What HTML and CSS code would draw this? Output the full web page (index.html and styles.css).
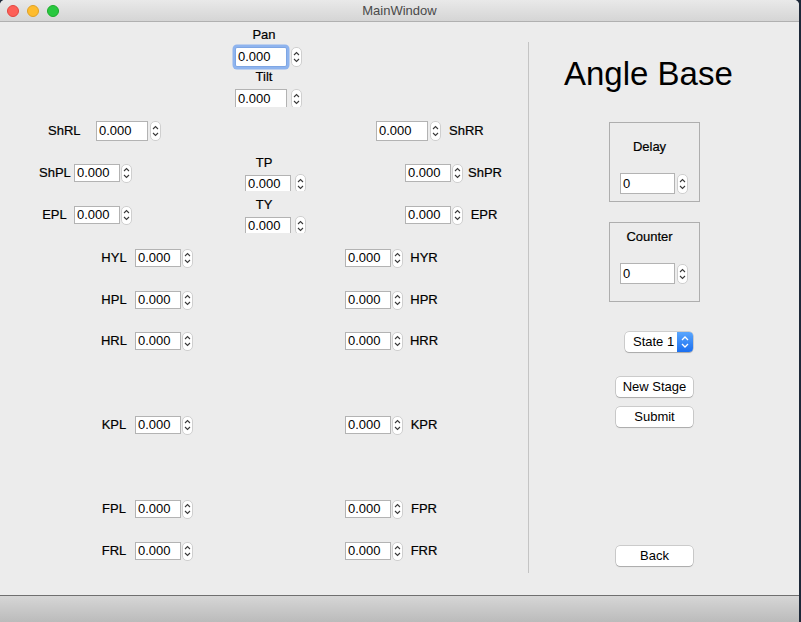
FILE: index.html
```html
<!DOCTYPE html>
<html>
<head>
<meta charset="utf-8">
<title>MainWindow</title>
<link rel="stylesheet" href="styles.css">
</head>
<body>
<div class="window">
  <div class="titlebar">
    <div class="lights"><span class="light red"></span><span class="light yellow"></span><span class="light green"></span></div>
    <div class="title">MainWindow</div>
    <div></div>
  </div>
  <div class="content">
    <div class="left">
      <div class="stack">
        <div class="cap">Pan</div>
        <div class="spin tall focus"><div class="field w52">0.000</div><div class="arr"><svg width="9" height="18" viewBox="0 0 9 18"><polyline points="2,7 4.5,4.5 7,7"/><polyline points="2,11 4.5,13.5 7,11"/></svg></div></div>
        <div class="cap tilt">Tilt</div>
        <div class="clip c18"><div class="spin tall wide-gap"><div class="field w52">0.000</div><div class="arr"><svg width="9" height="18" viewBox="0 0 9 18"><polyline points="2,7 4.5,4.5 7,7"/><polyline points="2,11 4.5,13.5 7,11"/></svg></div></div></div>
      </div>

      <div class="row shr">
        <span class="lbl first">ShRL</span>
        <div class="spin tall sp-a"><div class="field w52">0.000</div><div class="arr"><svg width="9" height="18" viewBox="0 0 9 18"><polyline points="2,7 4.5,4.5 7,7"/><polyline points="2,11 4.5,13.5 7,11"/></svg></div></div>
        <div class="spin tall sp-b"><div class="field w52">0.000</div><div class="arr"><svg width="9" height="18" viewBox="0 0 9 18"><polyline points="2,7 4.5,4.5 7,7"/><polyline points="2,11 4.5,13.5 7,11"/></svg></div></div>
        <span class="lbl rl">ShRR</span>
      </div>

      <div class="mid">
        <div class="mcol mleft">
          <div class="row mrow"><span class="lbl">ShPL</span><div class="spin"><div class="field">0.000</div><div class="arr"><svg width="9" height="18" viewBox="0 0 9 18"><polyline points="2,7 4.5,4.5 7,7"/><polyline points="2,11 4.5,13.5 7,11"/></svg></div></div></div>
          <div class="row mrow"><span class="lbl">EPL</span><div class="spin"><div class="field">0.000</div><div class="arr"><svg width="9" height="18" viewBox="0 0 9 18"><polyline points="2,7 4.5,4.5 7,7"/><polyline points="2,11 4.5,13.5 7,11"/></svg></div></div></div>
        </div>
        <div class="mcol mcenter">
          <div class="cap2">TP</div>
          <div class="clip c17"><div class="spin wide-gap"><div class="field">0.000</div><div class="arr"><svg width="9" height="18" viewBox="0 0 9 18"><polyline points="2,7 4.5,4.5 7,7"/><polyline points="2,11 4.5,13.5 7,11"/></svg></div></div></div>
          <div class="cap2 ty">TY</div>
          <div class="clip c17"><div class="spin wide-gap"><div class="field">0.000</div><div class="arr"><svg width="9" height="18" viewBox="0 0 9 18"><polyline points="2,7 4.5,4.5 7,7"/><polyline points="2,11 4.5,13.5 7,11"/></svg></div></div></div>
        </div>
        <div class="mcol mright">
          <div class="row mrow"><div class="spin"><div class="field">0.000</div><div class="arr"><svg width="9" height="18" viewBox="0 0 9 18"><polyline points="2,7 4.5,4.5 7,7"/><polyline points="2,11 4.5,13.5 7,11"/></svg></div></div><span class="lbl">ShPR</span></div>
          <div class="row mrow"><div class="spin"><div class="field">0.000</div><div class="arr"><svg width="9" height="18" viewBox="0 0 9 18"><polyline points="2,7 4.5,4.5 7,7"/><polyline points="2,11 4.5,13.5 7,11"/></svg></div></div><span class="lbl">EPR</span></div>
        </div>
      </div>

      <div class="row hrow hy">
        <span class="lbl lt">HYL</span>
        <div class="spin sl"><div class="field">0.000</div><div class="arr"><svg width="9" height="18" viewBox="0 0 9 18"><polyline points="2,7 4.5,4.5 7,7"/><polyline points="2,11 4.5,13.5 7,11"/></svg></div></div>
        <div class="spin sr"><div class="field">0.000</div><div class="arr"><svg width="9" height="18" viewBox="0 0 9 18"><polyline points="2,7 4.5,4.5 7,7"/><polyline points="2,11 4.5,13.5 7,11"/></svg></div></div>
        <span class="lbl rt">HYR</span>
      </div>
      <div class="row hrow hp">
        <span class="lbl lt">HPL</span>
        <div class="spin sl"><div class="field">0.000</div><div class="arr"><svg width="9" height="18" viewBox="0 0 9 18"><polyline points="2,7 4.5,4.5 7,7"/><polyline points="2,11 4.5,13.5 7,11"/></svg></div></div>
        <div class="spin sr"><div class="field">0.000</div><div class="arr"><svg width="9" height="18" viewBox="0 0 9 18"><polyline points="2,7 4.5,4.5 7,7"/><polyline points="2,11 4.5,13.5 7,11"/></svg></div></div>
        <span class="lbl rt">HPR</span>
      </div>
      <div class="row hrow hr">
        <span class="lbl lt">HRL</span>
        <div class="spin sl"><div class="field">0.000</div><div class="arr"><svg width="9" height="18" viewBox="0 0 9 18"><polyline points="2,7 4.5,4.5 7,7"/><polyline points="2,11 4.5,13.5 7,11"/></svg></div></div>
        <div class="spin sr"><div class="field">0.000</div><div class="arr"><svg width="9" height="18" viewBox="0 0 9 18"><polyline points="2,7 4.5,4.5 7,7"/><polyline points="2,11 4.5,13.5 7,11"/></svg></div></div>
        <span class="lbl rt">HRR</span>
      </div>
      <div class="row hrow kp">
        <span class="lbl lt">KPL</span>
        <div class="spin sl"><div class="field">0.000</div><div class="arr"><svg width="9" height="18" viewBox="0 0 9 18"><polyline points="2,7 4.5,4.5 7,7"/><polyline points="2,11 4.5,13.5 7,11"/></svg></div></div>
        <div class="spin sr"><div class="field">0.000</div><div class="arr"><svg width="9" height="18" viewBox="0 0 9 18"><polyline points="2,7 4.5,4.5 7,7"/><polyline points="2,11 4.5,13.5 7,11"/></svg></div></div>
        <span class="lbl rt">KPR</span>
      </div>
      <div class="row hrow fp">
        <span class="lbl lt">FPL</span>
        <div class="spin sl"><div class="field">0.000</div><div class="arr"><svg width="9" height="18" viewBox="0 0 9 18"><polyline points="2,7 4.5,4.5 7,7"/><polyline points="2,11 4.5,13.5 7,11"/></svg></div></div>
        <div class="spin sr"><div class="field">0.000</div><div class="arr"><svg width="9" height="18" viewBox="0 0 9 18"><polyline points="2,7 4.5,4.5 7,7"/><polyline points="2,11 4.5,13.5 7,11"/></svg></div></div>
        <span class="lbl rt">FPR</span>
      </div>
      <div class="row hrow fr">
        <span class="lbl lt">FRL</span>
        <div class="spin sl"><div class="field">0.000</div><div class="arr"><svg width="9" height="18" viewBox="0 0 9 18"><polyline points="2,7 4.5,4.5 7,7"/><polyline points="2,11 4.5,13.5 7,11"/></svg></div></div>
        <div class="spin sr"><div class="field">0.000</div><div class="arr"><svg width="9" height="18" viewBox="0 0 9 18"><polyline points="2,7 4.5,4.5 7,7"/><polyline points="2,11 4.5,13.5 7,11"/></svg></div></div>
        <span class="lbl rt">FRR</span>
      </div>
    </div>

    <div class="sep"></div>

    <div class="right">
      <div class="heading">Angle Base</div>
      <div class="group delay">
        <div class="gl">Delay</div>
        <div class="spin tall"><div class="field w55">0</div><div class="arr"><svg width="9" height="18" viewBox="0 0 9 18"><polyline points="2,7 4.5,4.5 7,7"/><polyline points="2,11 4.5,13.5 7,11"/></svg></div></div>
      </div>
      <div class="group counter">
        <div class="gl">Counter</div>
        <div class="spin tall"><div class="field w55">0</div><div class="arr"><svg width="9" height="18" viewBox="0 0 9 18"><polyline points="2,7 4.5,4.5 7,7"/><polyline points="2,11 4.5,13.5 7,11"/></svg></div></div>
      </div>
      <div class="combo">
        <span class="combo-text">State 1</span>
        <span class="combo-btn"><svg width="16" height="20" viewBox="0 0 16 20"><polyline points="5,8 8,5 11,8"/><polyline points="5,12 8,15 11,12"/></svg></span>
      </div>
      <button class="btn newstage">New Stage</button>
      <button class="btn submit">Submit</button>
      <button class="btn back">Back</button>
    </div>
  </div>
  <div class="statusbar"></div>
</div>
</body>
</html>
```

FILE: styles.css
```css
html, body {
  margin: 0;
  padding: 0;
}
body {
  width: 801px;
  height: 622px;
  overflow: hidden;
  background: #1d2838;
  font-family: "Liberation Sans", Arial, sans-serif;
  font-size: 13px;
  color: #111;
}
.window {
  width: 799px;
  height: 622px;
  background: #ececec;
  border-radius: 5px 5px 0 0;
  overflow: hidden;
  display: flex;
  flex-direction: column;
}
.titlebar {
  height: 21px;
  flex: none;
  border-bottom: 1px solid #b0b0b0;
  background: linear-gradient(#e9e9e9, #d5d5d5);
  display: grid;
  grid-template-columns: 1fr auto 1fr;
  align-items: center;
}
.lights {
  display: flex;
  gap: 8px;
  margin-left: 7px;
}
.light {
  width: 12px;
  height: 12px;
  border-radius: 50%;
  box-sizing: border-box;
}
.red { background: #fd5f57; border: 1px solid #e1463f; }
.yellow { background: #febc2e; border: 1px solid #dfa125; }
.green { background: #29c840; border: 1px solid #1dab2b; }
.title {
  color: #4a4a4a;
  line-height: 16px;
}
.content {
  height: 573px;
  flex: none;
  display: flex;
}
.statusbar {
  flex: none;
  height: 26px;
  border-top: 1px solid #6f6f6f;
  background: linear-gradient(#d6d6d6, #bbbbbb);
}

/* spin boxes */
.spin {
  display: flex;
  align-items: center;
}
.field {
  box-sizing: border-box;
  width: 46px;
  height: 18px;
  background: #fff;
  border: 1px solid #b3b3b3;
  padding-left: 2px;
  line-height: 16px;
  color: #000;
  white-space: nowrap;
}
.field.w52 { width: 52px; height: 20px; line-height: 18px; }
.field.w55 { width: 55px; height: 21px; line-height: 19px; }
.arr {
  box-sizing: border-box;
  width: 11px;
  height: 19px;
  margin-left: 1px;
  background: #fff;
  border: 1px solid #cfcfcf;
  border-radius: 5px;
  display: flex;
  align-items: center;
  justify-content: center;
  flex: none;
}
.tall .arr { height: 20px; margin-left: 2px; }
.arr svg { display: block; flex: none; }
.arr polyline {
  fill: none;
  stroke: #3a3a3a;
  stroke-width: 1.1;
}
.focus .field {
  border-color: #7ea6e4;
  border-radius: 2px;
  box-shadow: 0 0 0 2.5px #8fb4ee;
}
.focus .arr, .wide-gap .arr { margin-left: 4px; }
.clip { overflow: hidden; width: 72px; }
.c18 { height: 18px; }
.c17 { height: 17px; }

.row {
  display: flex;
  align-items: center;
}
.lbl {
  line-height: 16px;
  white-space: nowrap;
  color: #000;
  -webkit-text-stroke: 0.2px #000;
}
.cap, .cap2, .gl {
  color: #000;
  -webkit-text-stroke: 0.2px #000;
}

/* left panel */
.left {
  width: 528px;
  flex: none;
  box-sizing: border-box;
  padding-top: 5px;
  display: flex;
  flex-direction: column;
}
.stack {
  margin-left: 235px;
  width: 58px;
  display: flex;
  flex-direction: column;
  align-items: flex-start;
}
.cap {
  width: 58px;
  text-align: center;
  line-height: 16px;
}
.stack .spin { margin-top: 4px; }
.stack .tilt { margin-top: 2px; }
.stack .clip { margin-top: 4px; }
.stack .clip .spin { margin-top: 0; }

.shr { margin-top: 14px; height: 20px; }
.shr .first { margin-left: 48px; width: 32px; }
.shr .sp-a { margin-left: 16px; }
.shr .sp-b { margin-left: 215px; }
.shr .rl { margin-left: 8px; }

.mid {
  margin-top: 14px;
  height: 78px;
  display: flex;
  align-items: flex-start;
}
.mcol {
  display: flex;
  flex-direction: column;
}
.mrow { height: 18px; }
.mleft {
  width: 133px;
  padding-top: 9px;
  gap: 24px;
}
.mleft .lbl { margin-left: 39px; width: 31px; text-align: center; }
.mleft .spin { margin-left: 4px; }
.mcenter {
  margin-left: 112px;
  width: 59px;
}
.cap2 {
  width: 38px;
  text-align: center;
  line-height: 16px;
}
.mcenter .clip { margin-top: 3px; }
.mcenter .ty { margin-top: 6px; }
.mright {
  margin-left: 101px;
  padding-top: 9px;
  gap: 24px;
}
.mright .lbl { margin-left: 5px; width: 32px; text-align: center; }

.hrow { height: 18px; }
.hrow .lt { margin-left: 99px; width: 30px; text-align: center; }
.hrow .sl { margin-left: 6px; }
.hrow .sr { margin-left: 152px; }
.hrow .rt { margin-left: 6px; width: 30px; text-align: center; }
.hy { margin-top: 16px; }
.hp { margin-top: 24px; }
.hr { margin-top: 23px; }
.kp { margin-top: 66px; }
.fp { margin-top: 66px; }
.fr { margin-top: 24px; }

.sep {
  width: 1px;
  flex: none;
  height: 531px;
  margin-top: 20px;
  background: #c4c4c4;
}

/* right panel */
.right {
  width: 270px;
  flex: none;
  display: flex;
  flex-direction: column;
  align-items: flex-start;
}
.heading {
  margin: 33px 0 0 35px;
  font-size: 33px;
  line-height: 38px;
  color: #000;
}
.group {
  box-sizing: border-box;
  margin-left: 80px;
  width: 91px;
  height: 80px;
  border: 1px solid #aeaeae;
  display: flex;
  flex-direction: column;
  align-items: flex-start;
}
.delay { margin-top: 29px; }
.counter { margin-top: 20px; }
.gl {
  width: 79px;
  text-align: center;
  line-height: 16px;
}
.delay .gl { margin-top: 16px; }
.counter .gl { margin-top: 6px; }
.group .spin { margin-top: 18px; margin-left: 10px; }

.combo {
  margin: 30px 0 0 96px;
  width: 68px;
  height: 20px;
  display: flex;
  background: #fff;
  border-radius: 4px;
  box-shadow: 0 0 0 0.5px rgba(0, 0, 0, 0.25), 0 1px 1px rgba(0, 0, 0, 0.18);
}
.combo-text {
  flex: 1;
  padding-left: 8px;
  line-height: 20px;
  color: #000;
  white-space: nowrap;
}
.combo-btn {
  width: 16px;
  height: 20px;
  border-radius: 0 4px 4px 0;
  background: linear-gradient(#5aa6fd, #1b6ff0);
}
.combo-btn svg { display: block; }
.combo-btn polyline {
  fill: none;
  stroke: #fff;
  stroke-width: 1.3;
}
.btn {
  box-sizing: border-box;
  margin-left: 87px;
  width: 77px;
  height: 20px;
  padding: 0;
  border: none;
  border-radius: 4px;
  background: #fff;
  box-shadow: 0 0 0 0.5px rgba(0, 0, 0, 0.28), 0 1px 1px rgba(0, 0, 0, 0.16);
  font-family: "Liberation Sans", Arial, sans-serif;
  font-size: 13px;
  line-height: 20px;
  color: #000;
  text-align: center;
}
.newstage { margin-top: 25px; }
.submit { margin-top: 10px; }
.back { margin-top: 119px; }
```
